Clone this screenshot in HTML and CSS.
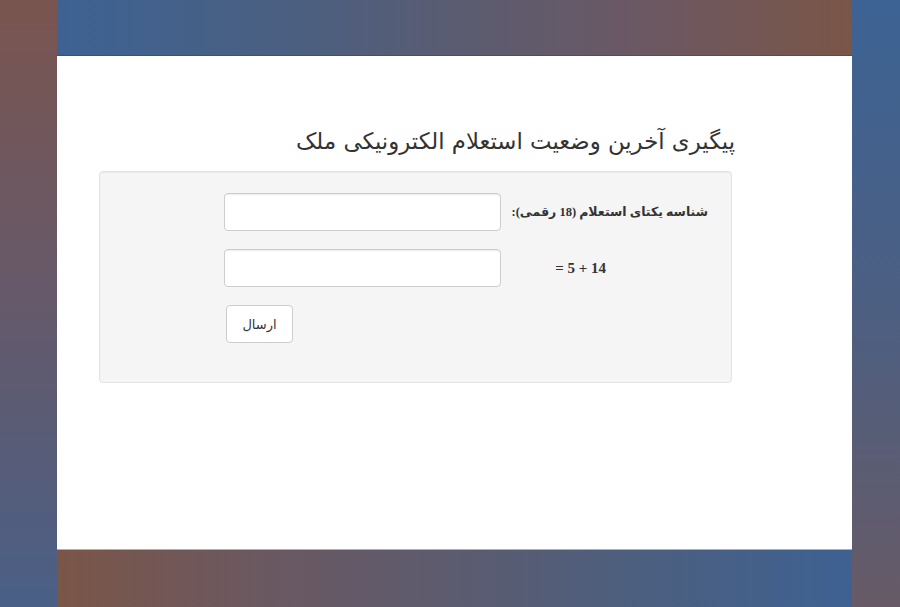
FILE: index.html
```html
<!DOCTYPE html>
<html lang="fa" dir="rtl">
<head>
    <meta charset="UTF-8">
    <meta name="viewport" content="width=device-width, initial-scale=1.0">
    <title>پیگیری استعلام الکترونیکی ملک</title>
    <link rel="stylesheet" href="styles.css">
</head>
<body>
    <div class="frame">
        <div class="side side-left"></div>

        <div class="middle">
            <div class="band band-top"></div>

            <main class="sheet">
                <div class="container">
                    <h3 class="page-title">پیگیری آخرین وضعیت استعلام الکترونیکی ملک</h3>

                    <!-- Tracking form -->
                    <form class="well" onsubmit="return false;">
                        <div class="form-row">
                            <label class="form-label" for="trackingId">شناسه یکتای استعلام (18 رقمی):</label>
                            <div class="form-field">
                                <input type="text" id="trackingId" class="form-input">
                            </div>
                        </div>

                        <div class="form-row">
                            <label class="form-label captcha" for="captcha">14 + 5 =</label>
                            <div class="form-field">
                                <input type="text" id="captcha" class="form-input">
                            </div>
                        </div>

                        <div class="form-row">
                            <div class="form-label"></div>
                            <div class="form-field field-actions">
                                <button type="submit" class="btn">ارسال</button>
                            </div>
                        </div>
                    </form>
                </div>
            </main>

            <div class="band band-bottom"></div>
        </div>

        <div class="side side-right"></div>
    </div>
</body>
</html>
```

FILE: styles.css
```css
html, body {
    height: 100%;
}

body {
    margin: 0;
    padding: 0;
    font-family: "DejaVu Sans", sans-serif;
    color: #333;
    background-color: #fff;
}

/* Outer frame: coloured strips around the white sheet */
.frame {
    display: flex;
    flex-direction: row;
    height: 607px;
    direction: ltr;
}

.side {
    flex: none;
}

.side-left {
    width: 57px;
    background: linear-gradient(to bottom, #7a5550 0%, #65596a 50%, #4a5f86 100%);
}

.side-right {
    width: 48px;
    background: linear-gradient(to bottom, #3c6394 0%, #4c5f82 50%, #675a66 100%);
}

.middle {
    flex: 1;
    display: flex;
    flex-direction: column;
}

.band {
    flex: none;
}

.band-top {
    height: 55px;
    border-bottom: 1px solid #4f4f58;
    background: linear-gradient(to right, #3d6293 0%, #4b5f80 30%, #5e5b6e 55%, #6c5862 75%, #7a5548 100%);
}

.band-bottom {
    height: 57px;
    border-top: 1px solid #b0b0b4;
    background: linear-gradient(to right, #7a5548 0%, #6b5860 25%, #5c5b6f 50%, #4b5f80 75%, #3e6192 100%);
}

.sheet {
    flex: 1;
    background-color: #fff;
}

.container {
    width: 633px;
    margin-left: 42px;
    direction: rtl;
}

.page-title {
    margin: 72px -3px 17px 0;
    font-size: 22.8px;
    font-weight: normal;
    line-height: 26px;
    color: #333;
}

/* Bootstrap-like well */
.well {
    display: flex;
    flex-direction: column;
    gap: 18px;
    padding: 21px 23px 39px 23px;
    background-color: #f5f5f5;
    border: 1px solid #e3e3e3;
    border-radius: 4px;
    box-shadow: inset 0 1px 1px rgba(0, 0, 0, 0.05);
}

.form-row {
    display: flex;
    flex-direction: row;
    align-items: center;
    gap: 11px;
}

.form-label {
    width: 196px;
    flex: none;
    font-family: "Liberation Serif", "DejaVu Sans", serif;
    font-size: 12.5px;
    font-weight: bold;
    text-align: right;
    white-space: nowrap;
    color: #333;
}

.form-label.captcha {
    box-sizing: border-box;
    padding-right: 102px;
    font-size: 15px;
}

.form-field {
    width: 277px;
    flex: none;
}

.form-input {
    display: block;
    box-sizing: border-box;
    width: 100%;
    height: 38px;
    padding: 6px 12px;
    font-size: 14px;
    background-color: #fff;
    border: 1px solid #ccc;
    border-radius: 4px;
    box-shadow: inset 0 1px 1px rgba(0, 0, 0, 0.075);
}

.field-actions {
    display: flex;
    justify-content: flex-end;
}

.btn {
    width: 67px;
    height: 38px;
    margin-left: 2px;
    font-family: "DejaVu Sans", sans-serif;
    font-size: 13px;
    color: #333;
    background-color: #fff;
    border: 1px solid #ccc;
    border-radius: 4px;
    cursor: pointer;
}

.btn:hover {
    background-color: #e6e6e6;
}
```
